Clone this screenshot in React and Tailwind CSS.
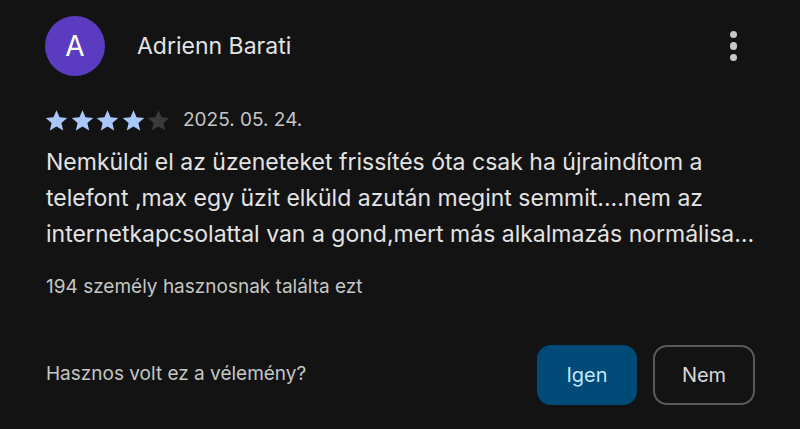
import React from "react";

const Star = ({ filled }) => (
  <svg viewBox="0 0 24 24" className="w-[25px] h-[25px]" fill={filled ? "#a8c7fa" : "#3a3a3a"}>
    <path d="M12 2.2l2.95 6.75 7.35.63-5.57 4.84 1.67 7.2L12 17.8l-6.4 3.82 1.67-7.2L1.7 9.58l7.35-.63z" />
  </svg>
);

const sorok = [
  "Nemküldi el az üzeneteket frissítés óta csak ha újraindítom a",
  "telefont ,max egy üzit elküld azután megint semmit....nem az",
  "internetkapcsolattal van a gond,mert más alkalmazás normálisa…",
];

export default function App() {
  const rating = 4;

  return (
    <div
      className="w-[800px] h-[429px] bg-[#131313] text-[#e3e3e3] overflow-hidden pl-[46px] pr-[45px] pt-4"
      style={{ fontFamily: "Inter, Roboto, sans-serif" }}
    >
      {/* Fejléc */}
      <div className="flex items-center h-[60px]">
        <div className="w-[60px] h-[60px] -ml-px rounded-full bg-[#5b3cc0] flex items-center justify-center text-white text-[28px]">
          A
        </div>
        <span className="ml-[32px] text-[23px] text-[#e3e3e3]">Adrienn Barati</span>
        <button className="ml-auto mr-[18px] flex flex-col gap-[4px] items-center">
          <span className="w-[7.5px] h-[7.5px] rounded-full bg-[#c8c8c8]"></span>
          <span className="w-[7.5px] h-[7.5px] rounded-full bg-[#c8c8c8]"></span>
          <span className="w-[7.5px] h-[7.5px] rounded-full bg-[#c8c8c8]"></span>
        </button>
      </div>

      {/* Értékelés */}
      <div className="flex items-center mt-[32px] h-[24px]">
        <div className="flex gap-[0.5px] -ml-[2px]">
          {[1, 2, 3, 4, 5].map((i) => (
            <Star key={i} filled={i <= rating} />
          ))}
        </div>
        <span className="ml-[12px] text-[19px] text-[#c4c7c5]">2025. 05. 24.</span>
      </div>

      {/* Szöveg */}
      <div className="mt-[12px] text-[23px] leading-[36px] text-[#e3e3e3]">
        {sorok.map((s) => (
          <div key={s} className="whitespace-nowrap">{s}</div>
        ))}
      </div>

      <p className="mt-[21px] text-[19px] text-[#c4c7c5]">194 személy hasznosnak találta ezt</p>

      {/* Hasznos volt? */}
      <div className="flex items-center mt-[43px]">
        <span className="text-[19px] text-[#c4c7c5]">Hasznos volt ez a vélemény?</span>
        <div className="ml-auto flex gap-4">
          <button className="w-[100px] h-[60px] rounded-[14px] bg-[#004a77] text-[#c2e7ff] text-[20px]">
            Igen
          </button>
          <button className="w-[102px] h-[60px] rounded-[14px] border-2 border-[#5a5a5a] text-[#d8d8d8] text-[20px]">
            Nem
          </button>
        </div>
      </div>
    </div>
  );
}
